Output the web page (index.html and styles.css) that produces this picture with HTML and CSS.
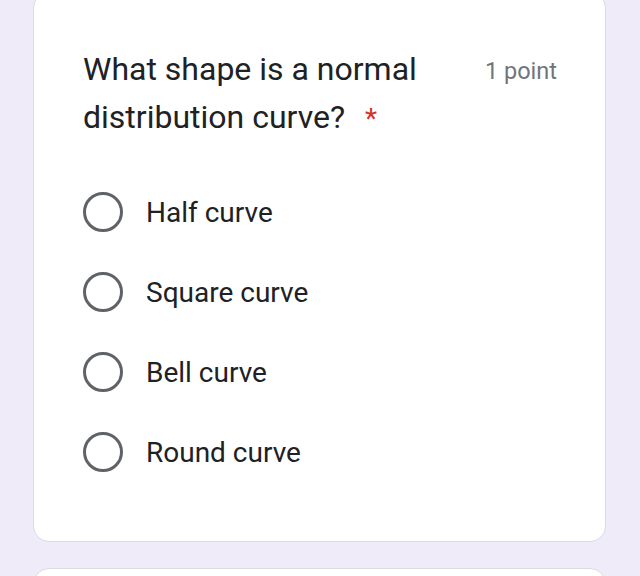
FILE: index.html
```html
<!DOCTYPE html>
<html lang="en">
<head>
  <meta charset="UTF-8" />
  <meta name="viewport" content="width=device-width, initial-scale=1.0" />
  <title>Quiz question</title>
  <link rel="stylesheet" href="styles.css">
</head>
<body>
  <div class="card">
    <div class="question">
      <div class="title">What shape is a normal distribution curve? <span class="req">*</span></div>
      <div class="points">1 point</div>
    </div>
    <div class="options">
      <label class="option"><span class="radio"></span>Half curve</label>
      <label class="option"><span class="radio"></span>Square curve</label>
      <label class="option"><span class="radio"></span>Bell curve</label>
      <label class="option"><span class="radio"></span>Round curve</label>
    </div>
  </div>
  <div class="card next"></div>
</body>
</html>
```

FILE: styles.css
```css
body {
  margin: 0;
  padding: 0 34px 0 33px;
  background: #f0ebf8;
  font-family: Roboto, "Noto Sans", sans-serif;
  color: #202124;
}
.card {
  background: #fff;
  border: 1px solid #dadce0;
  border-radius: 16px;
  margin-top: -8px;
  padding: 52px 48px 49px 49px;
}
.card.next {
  margin-top: 26px;
  height: 100px;
}
.question {
  display: flex;
  justify-content: space-between;
  align-items: flex-start;
}
.title {
  font-size: 32px;
  line-height: 48px;
  width: 370px;
}
.req {
  color: #d93025;
  font-size: 28px;
  line-height: 1;
  margin-left: 12px;
}
.points {
  font-size: 23.5px;
  line-height: 48px;
  color: #70757a;
  margin-top: 2px;
}
.options {
  margin-top: 31px;
}
.option {
  display: flex;
  align-items: center;
  height: 80px;
  font-size: 28px;
}
.radio {
  width: 34px;
  height: 34px;
  border: 3.5px solid #5f6368;
  border-radius: 50%;
  margin-right: 23px;
}
```
